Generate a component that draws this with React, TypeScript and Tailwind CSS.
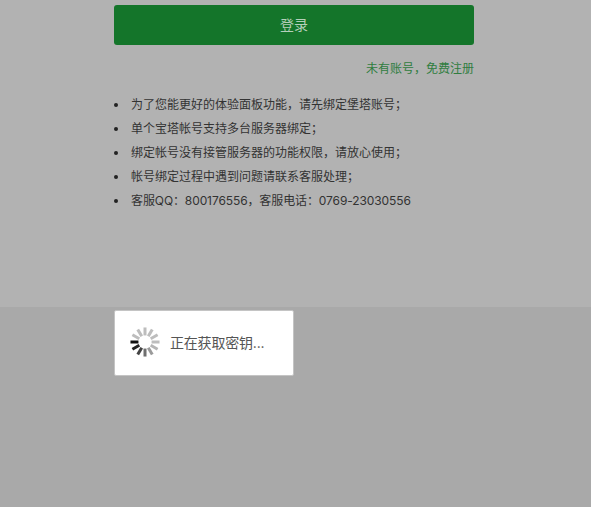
const font = { fontFamily: 'Inter, "Noto Sans CJK SC", sans-serif' };

const items = [
  { t: "为了您能更好的体验面板功能，请先绑定堡塔账号；", c: "" },
  { t: "单个宝塔帐号支持多台服务器绑定；", c: "" },
  { t: "绑定帐号没有接管服务器的功能权限，请放心使用；", c: "" },
  { t: "帐号绑定过程中遇到问题请联系客服处理；", c: "" },
  { t: "客服QQ：800176556，客服电话：0769-23030556", c: "tracking-[-0.1px]" },
];

const spokes = [
  { a: 270, c: "#111111" },
  { a: 240, c: "#222222" },
  { a: 210, c: "#444444" },
  { a: 180, c: "#6f6f6f" },
  { a: 150, c: "#9a9a9a" },
  { a: 120, c: "#b5b5b5" },
  { a: 90, c: "#bdbdbd" },
  { a: 60, c: "#bdbdbd" },
  { a: 30, c: "#bdbdbd" },
  { a: 0, c: "#bdbdbd" },
  { a: 330, c: "#bdbdbd" },
  { a: 300, c: "#bdbdbd" },
];

function Spinner() {
  return (
    <svg width="30" height="30" viewBox="0 0 32 32" className="shrink-0 -translate-y-px">
      {spokes.map((s) => (
        <rect
          key={s.a}
          x="14.4"
          y="0.5"
          width="3.2"
          height="8.5"
          fill={s.c}
          transform={`rotate(${s.a} 16 16)`}
        />
      ))}
    </svg>
  );
}

export default function App() {
  return (
    <div className="relative w-[591px] h-[507px] overflow-hidden bg-[#a9a9a9]" style={font}>
      <div className="h-[307px] bg-[#b2b2b2] pl-[114px] pr-[117px] pt-[5px]">
        <button className="block w-full h-10 rounded-[3px] bg-[#14752a] text-[#b5cfba] text-sm leading-10 text-center">
          登录
        </button>
        <div className="mt-[15px] text-right text-xs leading-[18px] text-[#2f7d3f]">
          未有账号，免费注册
        </div>
        <ul className="mt-[15px] text-xs leading-6 text-[#333333]">
          {items.map((it) => (
            <li key={it.t} className={`flex items-center gap-[13px] ${it.c}`}>
              <span className="w-1 h-1 rounded-full bg-[#222222] shrink-0" />
              <span>{it.t}</span>
            </li>
          ))}
        </ul>
      </div>
      <div className="absolute left-[114px] top-[310px] w-[180px] h-[66px] flex items-center gap-[10px] pl-[15px] bg-white rounded-[2px] border border-[#c4c4c4]">
        <Spinner />
        <span className="text-sm tracking-[-0.2px] text-[#555555] whitespace-nowrap">正在获取密钥...</span>
      </div>
    </div>
  );
}
